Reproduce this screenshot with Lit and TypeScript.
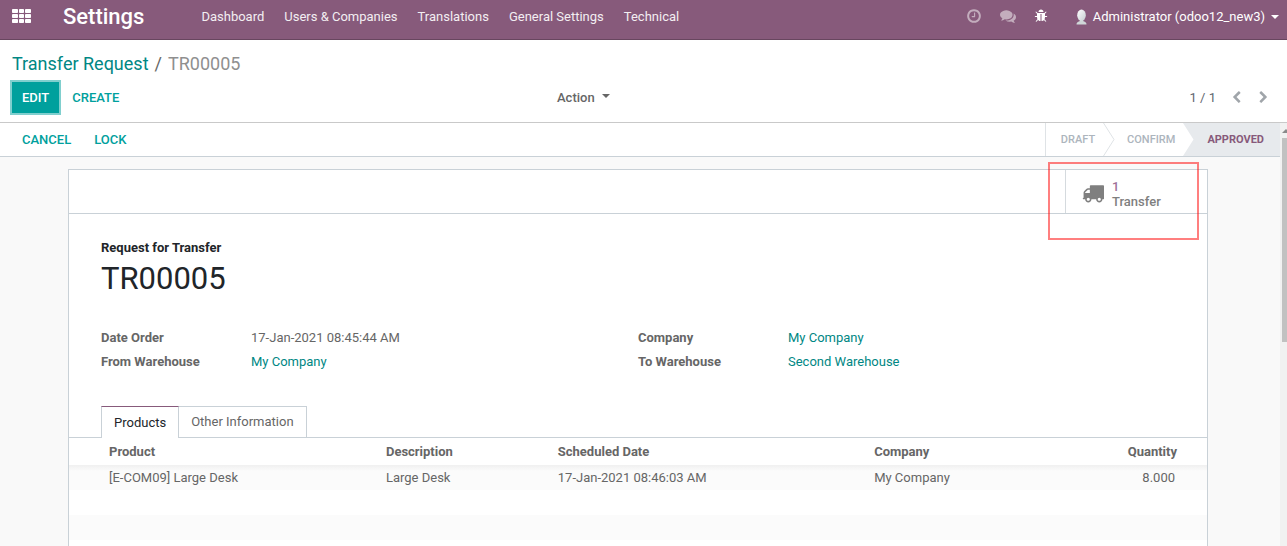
import { LitElement, html, css, svg } from "lit";
import { customElement, state } from "lit/decorators.js";

const ICONS = {
  clock: "M1024 544v448q0 14-9 23t-23 9h-320q-14 0-23-9t-9-23v-64q0-14 9-23t23-9h224v-352q0-14 9-23t23-9h64q14 0 23 9t9 23zm416 352q0-148-73-273t-198-198-273-73-273 73-198 198-73 273 73 273 198 198 273 73 273-73 198-198 73-273zm224 0q0 209-103 385.5t-279.5 279.5-385.5 103-385.5-103-279.5-279.5-103-385.5 103-385.5 279.5-279.5 385.5-103 385.5 103 279.5 279.5 103 385.5z",
  comments: "M1408 768q0 139-94 257t-256.5 186.5-353.5 68.5q-86 0-176-16-124 88-278 128-36 9-86 16h-3q-11 0-20.5-8t-11.5-21q-1-3-1-6.5t.5-6.5 2-6l2.5-5 3.5-5.5 4-5 4.5-5 4-4.5q5-6 23-25t26-29.5 22.5-29 25-38.5 20.5-44q-124-72-195-177t-71-224q0-139 94-257t256.5-186.5 353.5-68.5 353.5 68.5 256.5 186.5 94 257zm384 256q0 120-71 224.5t-195 176.5q10 24 20.5 44t25 38.5 22.5 29 26 29.5 23 25q1 1 4 4.5t4.5 5 4 5 3.5 5.5l2.5 5 2 6 .5 6.5-1 6.5q-3 14-13 22t-22 7q-50-7-86-16-154-40-278-128-90 16-176 16-271 0-472-132 58 4 88 4 161 0 309-45t264-129q125-92 192-212t67-254q0-77-23-152 129 71 204 178t75 230z",
  bug: "M1696 960q0 26-19 45t-45 19h-224q0 171-67 290l208 209q19 19 19 45t-19 45q-18 19-45 19t-45-19l-198-197q-5 5-15 13t-42 28.5-65 36.5-82 29-97 13v-896h-128v896q-51 0-101.5-13.5t-87-33-66-39-43.5-32.5l-15-14-183 207q-20 21-48 21-24 0-43-16-19-18-20.5-44.5t15.5-46.5l202-227q-58-114-58-274h-224q-26 0-45-19t-19-45 19-45 45-19h224v-294l-173-173q-19-19-19-45t19-45 45-19 45 19l173 173h844l173-173q19-19 45-19t45 19 19 45-19 45l-173 173v294h224q26 0 45 19t19 45zm-480-576h-640q0-133 93.5-226.5t226.5-93.5 226.5 93.5 93.5 226.5z",
  left: "M1427 301l-531 531 531 531q19 19 19 45t-19 45l-166 166q-19 19-45 19t-45-19l-742-742q-19-19-19-45t19-45l742-742q19-19 45-19t45 19l166 166q19 19 19 45t-19 45z",
  right: "M1363 877l-742 742q-19 19-45 19t-45-19l-166-166q-19-19-19-45t19-45l531-531-531-531q-19-19-19-45t19-45l166-166q19-19 45-19t45 19l742 742q19 19 19 45t-19 45z",
  truck: "M640 1408q0-52-38-90t-90-38-90 38-38 90 38 90 90 38 90-38 38-90zm-384-512h384v-256h-158q-13 0-22 9l-195 195q-9 9-9 22v30zm1280 512q0-52-38-90t-90-38-90 38-38 90 38 90 90 38 90-38 38-90zm256-1088v1024q0 15-4 26.5t-13.5 18.5-16.5 11.5-23.5 6-22.5 2-25.5 0-22.5-.5q0 106-75 181t-181 75-181-75-75-181h-384q0 106-75 181t-181 75-181-75-75-181h-64q-3 0-22.5.5t-25.5 0-22.5-2-23.5-6-16.5-11.5-13.5-18.5-4-26.5q0-26 19-45t45-19v-320q0-8-.5-35t0-38 2.5-34.5 6.5-37 14-30.5 22.5-30l198-198q19-19 50.5-32t58.5-13h160v-192q0-26 19-45t45-19h1024q26 0 45 19t19 45z",
};

const icon = (name: keyof typeof ICONS, size: number) => html`
  <svg class="icon" width=${size} height=${size} viewBox="0 0 1792 1792" fill="currentColor" aria-hidden="true">
    <path d=${ICONS[name]}></path>
  </svg>`;

const MENU = ["Dashboard", "Users & Companies", "Translations", "General Settings", "Technical"];

const FIELDS = [
  [
    { label: "Date Order", value: "17-Jan-2021 08:45:44 AM", link: false },
    { label: "From Warehouse", value: "My Company", link: true },
  ],
  [
    { label: "Company", value: "My Company", link: true },
    { label: "To Warehouse", value: "Second Warehouse", link: true },
  ],
];

const LINES = [
  {
    product: "[E-COM09] Large Desk",
    description: "Large Desk",
    date: "17-Jan-2021 08:46:03 AM",
    company: "My Company",
    quantity: "8.000",
  },
];

@customElement("app-root")
export class AppRoot extends LitElement {
  static styles = css`
    :host {
      display: flex;
      flex-direction: column;
      height: 100vh;
      overflow: hidden;
      background: #fff;
      color: #666;
      font: 13px/20px Roboto, "Noto Sans", sans-serif;
    }
    * { box-sizing: border-box; }
    button {
      font: inherit;
      color: inherit;
      background: none;
      border: 0;
      padding: 0;
      margin: 0;
      cursor: pointer;
    }
    a { color: #008784; text-decoration: none; }
    h1, ol, dl, dd { margin: 0; padding: 0; }
    .icon { display: block; }
    .caret {
      border: 4px solid transparent;
      border-top-color: currentColor;
      border-bottom: 0;
    }

    .navbar {
      flex: none;
      display: flex;
      align-items: center;
      height: 40px;
      padding: 0 8px 6px 12px;
      background: #875a7b;
      border-bottom: 1px solid #68465f;
      color: #fff;
    }
    .brand { margin-left: 32px; font-size: 22px; line-height: 32px; font-weight: 500; color: #fff; }
    .menu { display: flex; gap: 20px; margin-left: 57px; flex: 1; }
    .menu a { color: #f3eef2; white-space: nowrap; }
    .systray { display: flex; align-items: center; }
    .systray .dim { color: #c3adbd; margin-right: 18px; }
    .systray .dim, .systray .debug { padding-bottom: 2px; }
    .systray .debug { margin-right: 27px; }
    .user { display: flex; align-items: center; gap: 5px; }
    .user .caret { margin-left: 1px; }

    .panel {
      flex: none;
      padding: 14px 17px 9px 12px;
      border-bottom: 1px solid #c9c9c9;
    }
    .crumbs { display: flex; gap: 6px; list-style: none; font-size: 18px; line-height: 20px; }
    .current { color: #8f8f8f; }
    .tools {
      display: grid;
      grid-template-columns: 1fr 1fr;
      align-items: center;
      margin-top: 8px;
    }
    .btns { display: flex; gap: 1px; }
    .btns button {
      height: 31px;
      padding: 0 12px;
      font-weight: 500;
      color: #00a09d;
    }
    .btns .primary {
      padding: 0 10px;
      background: #00a09d;
      color: #fff;
      box-shadow: 0 0 0 2px #80cfce;
    }
    .side { display: flex; align-items: center; justify-content: space-between; }
    .action { display: flex; align-items: center; gap: 7px; font-weight: 500; margin-left: -84px; }
    .action .caret { margin-top: -4px; }
    .pager { display: flex; align-items: center; }
    .pager button { margin-left: 14px; color: #a0a5aa; }
    .pager span { color: #5f6770; }

    .main { flex: 1; min-height: 0; display: flex; }
    .form { flex: 1; min-width: 0; display: flex; flex-direction: column; background: #f9f9f9; }
    .statusbar {
      flex: none;
      display: flex;
      justify-content: space-between;
      height: 34px;
      padding-left: 10px;
      background: #fff;
      border-bottom: 1px solid #c9d1d7;
    }
    .statusbar .btns button { height: 33px; }
    .statusbar .btns button + button { padding-left: 10px; }
    .stages {
      display: flex;
      list-style: none;
      border-left: 1px solid #dfe3e6;
      font-size: 11px;
      font-weight: 500;
      line-height: 33px;
      color: #adb5bd;
    }
    .stages li { display: flex; }
    .stages li span { padding-left: 15px; }
    .stages li + li span { padding-left: 12px; }
    .stages .tip { display: block; margin-left: 8px; }
    .stages .on { background: #e7eaed; color: #875a7b; font-weight: 700; padding-right: 16px; }

    .thumbtrack { flex: none; width: 7px; padding: 15px 0 0 2px; background: #f1f1f1; position: relative; }
    .thumb { height: 50%; background: #c1c1c1; }
    .arrow { position: absolute; top: 6px; left: 2px; }

    .sheet {
      flex: 1;
      display: flex;
      flex-direction: column;
      margin: 12px 72px 0 68px;
      background: #fff;
      border: 1px solid #c9d1d7;
      border-bottom: 0;
    }
    .boxes {
      flex: none;
      display: flex;
      justify-content: flex-end;
      height: 44px;
      border-bottom: 1px solid #c9d1d7;
    }
    .stat {
      position: relative;
      display: flex;
      align-items: center;
      gap: 8px;
      width: 142px;
      padding: 4px 0 0 16px;
      border-left: 1px solid #d5dade;
      text-align: left;
      font-weight: 500;
      line-height: 15px;
      color: #7f7f7f;
    }
    .stat .icon { margin-bottom: 2px; }
    .count { display: block; color: #a0729a; }
    .mark {
      position: absolute;
      inset: -8px 8px -27px -18px;
      border: 2px solid rgba(255, 0, 0, 0.5);
      pointer-events: none;
    }
    .body { padding: 24px 32px 0; }
    .kind { display: block; font-weight: 700; color: #212529; }
    .title { font-size: 31px; line-height: 38px; font-weight: 400; color: #212529; margin-top: 2px; }
    .groups { display: grid; grid-template-columns: 1fr 1fr; margin-top: 28px; }
    .field { display: grid; grid-template-columns: 150px 1fr; line-height: 24px; }
    .field dt { font-weight: 700; }

    .tabs { display: flex; padding-left: 32px; margin-top: 32px; border-bottom: 1px solid #c9d1d7; }
    .tab {
      height: 31px;
      padding: 0 12px;
      border: 1px solid #c9d1d7;
      border-bottom: 0;
      border-left: 0;
    }
    .tab.active {
      height: 32px;
      margin-bottom: -1px;
      border-left: 1px solid #c9d1d7;
      border-top-color: #875a7b;
      background: #fff;
      color: #212529;
    }
    table { width: 100%; table-layout: fixed; border-collapse: collapse; text-align: left; }
    th, td { padding: 0 4px; height: 25px; white-space: nowrap; }
    th { height: 27px; font-weight: 700; }
    th:first-child, td:first-child { padding-left: 40px; }
    th:last-child { text-align: right; padding-right: 30px; }
    td:last-child { text-align: right; padding-right: 32px; }
    .c1 { width: 27.5%; }
    .c2 { width: 15.1%; }
    .c3 { width: 27.8%; }
    .c4 { width: 15%; }
    tbody tr:nth-child(odd) { background: #fbfbfb; }
    tbody tr:first-child { background: linear-gradient(#f0f0f0, #fbfbfb 6px); }
  `;

  @state() private tab = "Products";

  private tabButton(name: string) {
    return html`<button
      class="tab ${this.tab === name ? "active" : ""}"
      role="tab"
      aria-selected=${this.tab === name}
      @click=${() => (this.tab = name)}
    >${name}</button>`;
  }

  private navbar() {
    return html`
      <header class="navbar">
        <button aria-label="Applications">
          <svg class="icon" width="19" height="15" viewBox="0 0 19 15" fill="#fff">
            ${[0, 5, 10].map((y) => [0, 7, 13].map((x) => svg`<rect x=${x} y=${y} width=${x === 7 ? 5 : 6} height="4" rx="0.8"></rect>`))}
          </svg>
        </button>
        <a class="brand" href="#">Settings</a>
        <nav class="menu">${MENU.map((m) => html`<a href="#">${m}</a>`)}</nav>
        <div class="systray">
          <button class="dim" aria-label="Activities">${icon("clock", 16)}</button>
          <button class="dim" aria-label="Conversations">${icon("comments", 16)}</button>
          <button class="debug" aria-label="Debug">${icon("bug", 14)}</button>
          <button class="user">
            <svg class="icon" width="13" height="16" viewBox="0 0 13 16" aria-hidden="true">
              <defs>
                <linearGradient id="g" x1="0" x2="1" y1="0" y2="1">
                  <stop offset="0" stop-color="#fff"></stop>
                  <stop offset="1" stop-color="#c3cdd0"></stop>
                </linearGradient>
              </defs>
              <path d="M1.500 15.500q0-2.500 3-3.200l.5-1.500h3l.5 1.500q3 .7 3 3.200z" fill="#cfd6d8"></path>
              <ellipse cx="6.500" cy="6.200" rx="4.300" ry="5.700" fill="url(#g)"></ellipse>
            </svg>
            <span>Administrator (odoo12_new3)</span><i class="caret"></i>
          </button>
        </div>
      </header>`;
  }

  render() {
    return html`
      ${this.navbar()}
      <section class="panel">
        <ol class="crumbs">
          <li><a href="#">Transfer Request</a></li>
          <li aria-hidden="true">/</li>
          <li class="current">TR00005</li>
        </ol>
        <div class="tools">
          <div class="btns"><button class="primary">EDIT</button><button>CREATE</button></div>
          <div class="side">
            <button class="action">Action <i class="caret"></i></button>
            <div class="pager">
              <span>1 / 1</span>
              <button aria-label="Previous">${icon("left", 13)}</button>
              <button aria-label="Next">${icon("right", 13)}</button>
            </div>
          </div>
        </div>
      </section>
      <main class="main">
        <div class="form">
          <div class="statusbar">
            <div class="btns"><button>CANCEL</button><button>LOCK</button></div>
            <ol class="stages">
              <li>
                <span>DRAFT</span>
                <svg class="tip" width="12" height="33" viewBox="0 0 12 33" fill="none"><path d="M.5 0L11 16.500L.5 33" stroke="#dfe3e6"></path></svg>
              </li>
              <li>
                <span>CONFIRM</span>
                <svg class="tip" width="12" height="33" viewBox="0 0 12 33"><path d="M0 0H12V33H0L10.500 16.500z" fill="#e7eaed"></path></svg>
              </li>
              <li class="on"><span>APPROVED</span></li>
            </ol>
          </div>
          <article class="sheet">
            <div class="boxes">
              <button class="stat">
                ${icon("truck", 22)}
                <span><span class="count">1</span>Transfer</span>
                <i class="mark"></i>
              </button>
            </div>
            <div class="body">
              <span class="kind">Request for Transfer</span>
              <h1 class="title">TR00005</h1>
              <div class="groups">
                ${FIELDS.map((col) => html`<dl>
                  ${col.map((f) => html`<div class="field">
                    <dt>${f.label}</dt>
                    <dd>${f.link ? html`<a href="#">${f.value}</a>` : f.value}</dd>
                  </div>`)}
                </dl>`)}
              </div>
            </div>
            <div class="tabs" role="tablist">
              ${this.tabButton("Products")}${this.tabButton("Other Information")}
            </div>
            <table>
              <colgroup><col class="c1" /><col class="c2" /><col class="c3" /><col class="c4" /><col /></colgroup>
              <thead>
                <tr><th>Product</th><th>Description</th><th>Scheduled Date</th><th>Company</th><th>Quantity</th></tr>
              </thead>
              <tbody>
                ${LINES.map((l) => html`<tr>
                  <td>${l.product}</td><td>${l.description}</td><td>${l.date}</td><td>${l.company}</td><td>${l.quantity}</td>
                </tr>`)}
                ${[1, 2, 3].map(() => html`<tr><td colspan="5"></td></tr>`)}
              </tbody>
            </table>
          </article>
        </div>
        <div class="thumbtrack" aria-hidden="true">
          <svg class="arrow" width="5" height="4" viewBox="0 0 5 4"><path d="M0 4L4 0L5 1V4z" fill="#8a8a8a"></path></svg>
          <div class="thumb"></div>
        </div>
      </main>`;
  }
}
